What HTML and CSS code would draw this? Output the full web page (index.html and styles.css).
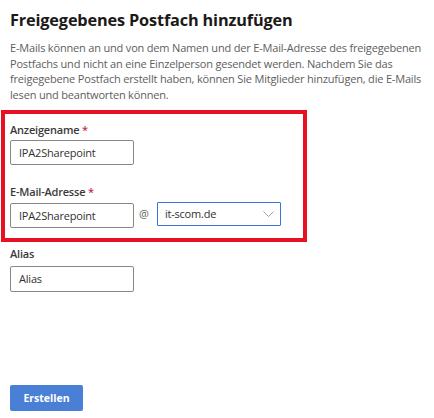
FILE: index.html
```html
<!DOCTYPE html>
<html lang="de">
<head>
<meta charset="utf-8">
<link rel="stylesheet" href="styles.css">
</head>
<body>
<div class="page">
  <h1 class="title">Freigegebenes Postfach hinzufügen</h1>
  <p class="desc">E-Mails können an und von dem Namen und der E-Mail-Adresse des freigegebenen Postfachs und nicht an eine Einzelperson gesendet werden. Nachdem Sie das freigegebene Postfach erstellt haben, können Sie Mitglieder hinzufügen, die E-Mails lesen und beantworten können.</p>
  <div class="highlight">
    <div class="field">
      <div class="label">Anzeigename <span class="req">*</span></div>
      <div class="input">IPA2Sharepoint</div>
    </div>
    <div class="field field-mail">
      <div class="label">E-Mail-Adresse <span class="req">*</span></div>
      <div class="mail-row">
        <div class="input">IPA2Sharepoint</div>
        <span class="at">@</span>
        <div class="select">
          <span>it-scom.de</span>
          <svg class="chev" width="11" height="6" viewBox="0 0 11 6"><path d="M0.5 0.5 L5.5 5.5 L10.5 0.5" fill="none" stroke="#a19f9d" stroke-width="1"/></svg>
        </div>
      </div>
    </div>
  </div>
  <div class="field field-alias">
    <div class="label">Alias</div>
    <div class="input">Alias</div>
  </div>
  <button class="btn">Erstellen</button>
</div>
</body>
</html>
```
FILE: styles.css
```css
html, body { margin: 0; padding: 0; background: #fff; }
body { font-family: "Open Sans", "Noto Sans", sans-serif; color: #323130; width: 434px; height: 418px; overflow: hidden; }
.page { padding: 8px 10px 0 10px; display: flex; flex-direction: column; align-items: flex-start; }
.title { margin: 0; font-size: 16.3px; font-weight: 700; color: #1b1a19; line-height: 24px; letter-spacing: -0.15px; }
.desc { margin: 8px 0 0 0; font-size: 11px; line-height: 15.7px; color: #605e5c; width: 416px; letter-spacing: -0.18px; }
.highlight { margin: 7px 0 0 -9px; border: 4px solid #e81123; width: 306px; box-sizing: border-box; padding: 8px 5px 10px 5px; }
.label { font-size: 11px; font-weight: 600; color: #3b3a39; line-height: 16px; letter-spacing: -0.2px; }
.req { color: #c4314b; }
.input { margin-top: 2px; width: 124px; height: 25px; box-sizing: border-box; border: 1px solid #8a8886; border-radius: 2px; font-size: 11px; line-height: 23px; padding-left: 8px; color: #323130; letter-spacing: -0.2px; }
.field-mail { margin-top: 19px; }
.mail-row { display: flex; align-items: flex-start; margin-top: 2px; }
.mail-row .input { margin-top: 1px; }
.at { font-size: 11px; color: #605e5c; margin: 4px 8px 0 5px; line-height: 16px; }
.select { width: 124px; height: 24px; box-sizing: border-box; border: 1px solid #3a72d6; border-radius: 1px; display: flex; align-items: center; justify-content: space-between; padding: 0 6px 0 7px; font-size: 11px; color: #323130; letter-spacing: -0.2px; }
.chev { display: block; }
.field-alias { margin-top: 4px; }
.field-alias .input { margin-top: 4px; height: 26px; line-height: 24px; }
.btn { margin-top: 93px; width: 73px; height: 26px; background: #4a7fd6; color: #fff; border: none; border-radius: 2px; font-family: inherit; font-size: 10.5px; font-weight: 700; padding: 0; }
```
